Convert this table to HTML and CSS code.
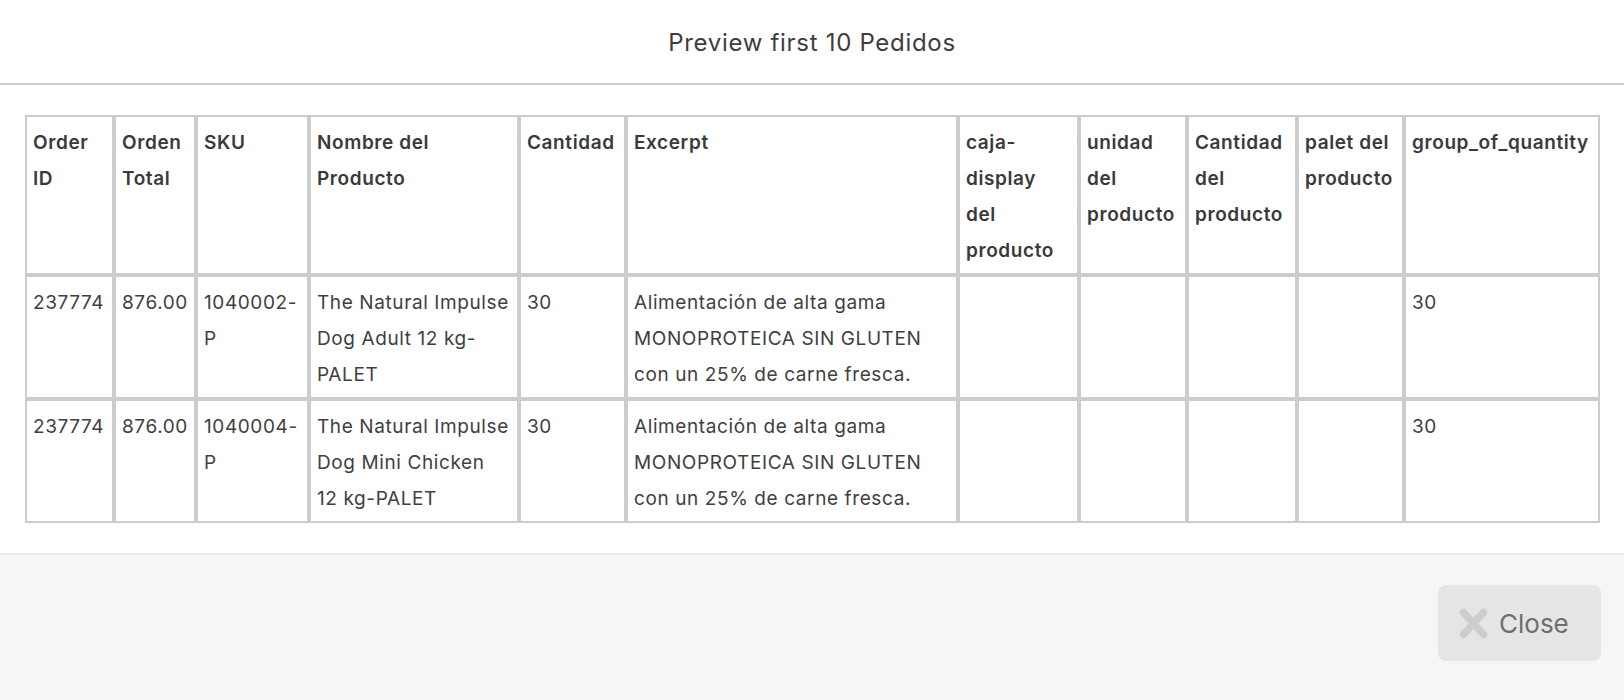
FILE: index.html
```html
<!DOCTYPE html>
<html lang="es">
<head>
<meta charset="utf-8">
<title>Preview first 10 Pedidos</title>
<link rel="stylesheet" href="styles.css">
</head>
<body>
<div class="modal">
  <header class="modal-header">
    <h4 class="modal-title">Preview first 10 Pedidos</h4>
  </header>
  <div class="modal-body">
    <table class="preview">
      <thead>
        <tr>
          <th class="c1">Order ID</th>
          <th class="c2">Orden Total</th>
          <th class="c3">SKU</th>
          <th class="c4">Nombre del Producto</th>
          <th class="c5">Cantidad</th>
          <th class="c6">Excerpt</th>
          <th class="c7">caja-display del producto</th>
          <th class="c8">unidad del producto</th>
          <th class="c9">Cantidad del producto</th>
          <th class="c10">palet del producto</th>
          <th class="c11">group_of_quantity</th>
        </tr>
      </thead>
      <tbody>
        <tr>
          <td>237774</td>
          <td>876.00</td>
          <td>1040002-P</td>
          <td>The Natural Impulse Dog Adult 12&nbsp;kg-PALET</td>
          <td>30</td>
          <td>Alimentación de alta gama MONOPROTEICA SIN GLUTEN con un 25% de carne fresca.</td>
          <td></td>
          <td></td>
          <td></td>
          <td></td>
          <td>30</td>
        </tr>
        <tr>
          <td>237774</td>
          <td>876.00</td>
          <td>1040004-P</td>
          <td>The Natural Impulse Dog Mini Chicken 12&nbsp;kg-PALET</td>
          <td>30</td>
          <td>Alimentación de alta gama MONOPROTEICA SIN GLUTEN con un 25% de carne fresca.</td>
          <td></td>
          <td></td>
          <td></td>
          <td></td>
          <td>30</td>
        </tr>
      </tbody>
    </table>
  </div>
  <footer class="modal-footer">
    <button class="btn-close" type="button">
      <svg class="icon-x" width="29" height="31" viewBox="0 0 29 31" aria-hidden="true">
        <path d="M4.5 4.5 L24.5 26.5 M24.5 4.5 L4.5 26.5" stroke="#cdcdcd" stroke-width="7.5" stroke-linecap="round" fill="none"/>
      </svg>
      <span>Close</span>
    </button>
  </footer>
</div>
</body>
</html>
```

FILE: styles.css
```css
html, body {
  margin: 0;
  padding: 0;
  background: #ffffff;
}

body {
  font-family: Inter, "Noto Sans", "Liberation Sans", sans-serif;
  color: #333333;
}

.modal {
  display: flex;
  flex-direction: column;
  width: 1624px;
  height: 700px;
}

.modal-header {
  height: 83px;
  border-bottom: 2px solid #cccccc;
  display: flex;
  align-items: center;
  justify-content: center;
}

.modal-title {
  margin: 0;
  font-size: 24px;
  font-weight: 400;
  letter-spacing: 0.7px;
  color: #3d3d3d;
  padding-top: 2px;
}

.modal-body {
  padding: 30px 24px 30px 25px;
}

.preview {
  border-collapse: separate;
  border-spacing: 0;
  table-layout: fixed;
  width: 1575px;
  font-size: 19px;
  letter-spacing: 0.6px;
  line-height: 36px;
}

.preview th,
.preview td {
  box-sizing: border-box;
  border: 2px solid #cccccc;
  padding: 8px 6px 4px 6px;
  text-align: left;
  vertical-align: top;
}

.preview th {
  font-weight: 600;
  color: #3a3a3a;
}

.preview td {
  font-weight: 400;
  color: #404040;
}

.c1 { width: 89px; }
.c2 { width: 82px; }
.c3 { width: 113px; }
.c4 { width: 210px; }
.c5 { width: 107px; }
.c6 { width: 332px; }
.c7 { width: 121px; }
.c8 { width: 108px; }
.c9 { width: 110px; }
.c10 { width: 107px; }
.c11 { width: 196px; }

.modal-footer {
  flex: 1;
  background: #f5f6f6;
  border-top: 2px solid #e8e9e9;
  display: flex;
  justify-content: flex-end;
  align-items: flex-start;
  padding: 30px 23px 0 0;
}

.btn-close {
  display: flex;
  align-items: center;
  gap: 11px;
  width: 163px;
  height: 76px;
  padding: 0 0 0 21px;
  border: none;
  border-radius: 8px;
  background: #e4e5e5;
  font-family: Inter, "Noto Sans", "Liberation Sans", sans-serif;
  font-size: 26px;
  color: #6e6e6e;
}

.icon-x {
  flex: none;
}
```
